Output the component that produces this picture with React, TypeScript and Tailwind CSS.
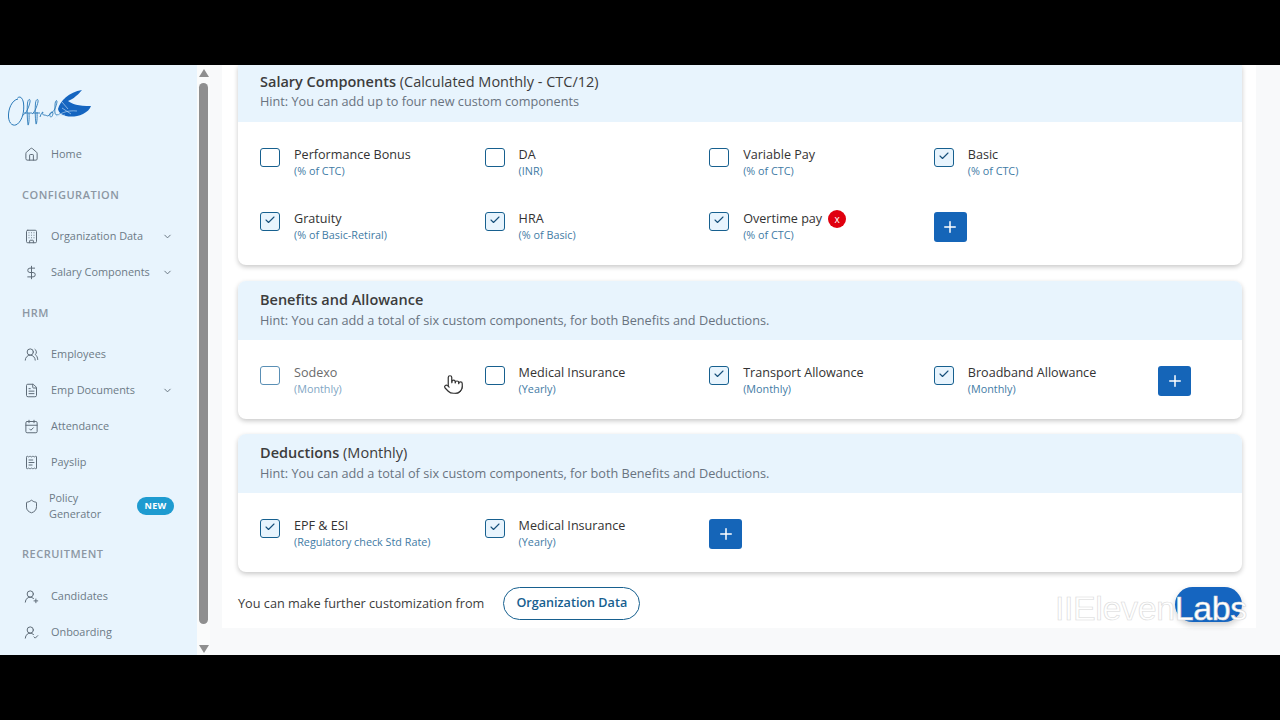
import { Building, CalendarCheck, Check, ChevronDown, DollarSign, FileText, House, Plus, Pointer, ReceiptText, Shield, UserRoundCheck, UserRoundPlus, UsersRound } from 'lucide-react';
import type { ReactNode } from 'react';

type Item = { label: string; sub: string; checked?: boolean; muted?: boolean; remove?: boolean };

const salary: Item[] = [
  { label: 'Performance Bonus', sub: '(% of CTC)' },
  { label: 'DA', sub: '(INR)' },
  { label: 'Variable Pay', sub: '(% of CTC)' },
  { label: 'Basic', sub: '(% of CTC)', checked: true },
  { label: 'Gratuity', sub: '(% of Basic-Retiral)', checked: true },
  { label: 'HRA', sub: '(% of Basic)', checked: true },
  { label: 'Overtime pay', sub: '(% of CTC)', checked: true, remove: true },
];
const benefits: Item[] = [
  { label: 'Sodexo', sub: '(Monthly)', muted: true },
  { label: 'Medical Insurance', sub: '(Yearly)' },
  { label: 'Transport Allowance', sub: '(Monthly)', checked: true },
  { label: 'Broadband Allowance', sub: '(Monthly)', checked: true },
];
const deductions: Item[] = [
  { label: 'EPF & ESI', sub: '(Regulatory check Std Rate)', checked: true },
  { label: 'Medical Insurance', sub: '(Yearly)', checked: true },
];

function Logo() {
  return (
    <svg viewBox="0 0 84 40" className="w-[84px] h-[40px]" fill="none">
      {/* script part of the logo */}
      <path d="M11 10C5 11 1 20 1.500 28c.5 7 5 10 9 7 5-4 7-13 6-21-1-6-4-7-6-5" stroke="#2a79b8" strokeWidth="1" />
      <path d="M16 26c3-1 6-8 7-13 .5-4-2-3-2.500 1-.5 6-.5 14 .5 22 .5 1 1.500-5 1-12M17 24h8" stroke="#2a79b8" strokeWidth="0.9" />
      <path d="M25 25c3-2 5-8 6-12 .5-4-2-3-2.500 1-.5 6-.5 13 .5 21 .5 1 1.500-5 1-12M26 24h7" stroke="#2a79b8" strokeWidth="0.9" />
      <path d="M33 28c1-3 2-5 3-5-1 2 0 3 1 3 2 0 3 1 4 1 2-1 2-4 4-4 2 0 .5 5-1 5-1 0-2-2 0-4 3-1 5-6 6-11 0-3-2-1-2 3 0 5-1 10 2 10 2 0 4-2 6-4" stroke="#2a79b8" strokeWidth="0.9" />
      {/* feather */}
      <path d="M51 20C53 12 62 3 75 1c-2 2-3 4-6 6-3 3-6 4-8 5 4 3 10 5 23 5-1 3-4 6-8 8-6 3-13 3-17 2-4-1-7-3-8-7z" fill="#1565c0" />
      <path d="M46 31c6-7 14-10 24-9M55 19l9 6M55 13l6 7M50 27l8-1" stroke="#cfe6f8" strokeWidth="0.6" />
    </svg>
  );
}

function Section({ children }: { children: ReactNode }) {
  return <div className="h-4 flex items-center pl-[22px] text-[11px] font-semibold tracking-[0.5px] text-[#8c97a3]">{children}</div>;
}

function NavItem({ icon, label, chevron }: { icon: ReactNode; label: string; chevron?: boolean }) {
  return (
    <div className="h-[36px] flex items-center pl-[24px] text-[#6c7a86]">
      <span className="w-[27px] shrink-0">{icon}</span>
      <span className="text-[10.9px] whitespace-nowrap">{label}</span>
      {chevron && <ChevronDown size={11} className="absolute left-[162px] text-[#5f6c78]" />}
    </div>
  );
}

function Sidebar() {
  const ic = 'w-[15px] h-[15px] text-[#5f6c78]';
  return (
    <aside className="w-[197px] shrink-0 bg-[#e8f4fd] overflow-hidden relative">
      <div className="pt-[24px] pl-[7px] h-[71px]"><Logo /></div>
      <NavItem icon={<House className={ic} strokeWidth={1.6} />} label="Home" />
      <div className="mt-[15px]"><Section>CONFIGURATION</Section></div>
      <div className="mt-[15px]">
        <NavItem icon={<Building className={ic} strokeWidth={1.6} />} label="Organization Data" chevron />
        <NavItem icon={<DollarSign className={ic} strokeWidth={1.6} />} label="Salary Components" chevron />
      </div>
      <div className="mt-[15px]"><Section>HRM</Section></div>
      <div className="mt-[15px]">
        <NavItem icon={<UsersRound className={ic} strokeWidth={1.6} />} label="Employees" />
        <NavItem icon={<FileText className={ic} strokeWidth={1.6} />} label="Emp Documents" chevron />
        <NavItem icon={<CalendarCheck className={ic} strokeWidth={1.6} />} label="Attendance" />
        <NavItem icon={<ReceiptText className={ic} strokeWidth={1.6} />} label="Payslip" />
      </div>
      <div className="h-[52px] flex items-center pl-[24px] text-[#6c7a86]">
        <span className="w-[25px] shrink-0"><Shield className={ic} strokeWidth={1.6} /></span>
        <span className="w-[70px] text-[10.9px] leading-[16px]">Policy Generator</span>
        <span className="ml-[18px] w-[37px] h-[18px] rounded-full bg-[#1e9bd0] text-white text-[9px] font-bold flex items-center justify-center tracking-[0.3px]">NEW</span>
      </div>
      <div className="mt-[14px]"><Section>RECRUITMENT</Section></div>
      <div className="mt-[16px]">
        <NavItem icon={<UserRoundPlus className={ic} strokeWidth={1.6} />} label="Candidates" />
        <NavItem icon={<UserRoundCheck className={ic} strokeWidth={1.6} />} label="Onboarding" />
      </div>
    </aside>
  );
}

function Scrollbar() {
  return (
    <div className="w-[13px] shrink-0 bg-[#fafbfb] flex flex-col items-center">
      <div className="mt-[4px] w-0 h-0 border-x-[5px] border-x-transparent border-b-[8px] border-b-[#8f8f8f]" />
      <div className="mt-[6px] w-[9px] h-[541px] rounded-full bg-[#8f8f8f]" />
      <div className="mt-[21px] w-0 h-0 border-x-[5px] border-x-transparent border-t-[8px] border-t-[#8f8f8f]" />
    </div>
  );
}

function Option({ item }: { item: Item }) {
  return (
    <div className="flex h-[54px]">
      <div className={`mt-[1px] w-[20px] h-[19px] shrink-0 rounded-[3px] border-[1.5px] flex items-center justify-center ${item.muted ? 'border-[#5a8fb5]' : 'border-[#17608f]'} ${item.checked ? 'bg-[#e8f4fd]' : 'bg-white'}`}>
        {item.checked && <Check size={12} strokeWidth={2.2} className="text-[#17507a] -mt-[3px]" />}
      </div>
      <div className="ml-[14px]">
        <div className="flex items-center h-[16px]">
          <span className={`text-[12.6px] leading-[16px] whitespace-nowrap ${item.muted ? 'text-[#6b6b6b]' : 'text-[#333]'}`}>{item.label}</span>
          {item.remove && <span className="ml-[6px] w-[18px] h-[18px] rounded-full bg-[#e0000f] text-white text-[10px] flex items-center justify-center">x</span>}
        </div>
        <div className={`text-[10.8px] leading-[16px] whitespace-nowrap ${item.muted ? 'text-[#7fa6c4]' : 'text-[#3f7ba5]'}`}>{item.sub}</div>
      </div>
    </div>
  );
}

function AddButton() {
  return (
    <div className="w-[33px] h-[30px] mt-[1px] rounded-[3px] bg-[#1565b8] flex items-center justify-center">
      <Plus size={18} strokeWidth={2} className="text-white" />
    </div>
  );
}

function Card({ title, note, hint, items, cols, topCut }: { title: string; note?: string; hint: string; items: Item[]; cols: string; topCut?: boolean }) {
  return (
    <section className={`bg-white shadow-[0_2px_5px_rgba(0,0,0,0.22)] rounded-b-[8px] ${topCut ? '' : 'rounded-t-[8px]'}`}>
      <div className={`bg-[#e8f4fd] px-[22px] ${topCut ? 'pt-[7px] h-[57px]' : 'pt-[9px] h-[59px] rounded-t-[8px]'}`}>
        <div className="text-[14.5px] leading-[20px] text-[#3c3c3c]">
          <span className="font-semibold">{title}</span>{note && ` ${note}`}
        </div>
        <div className={`text-[12.7px] leading-[20px] text-[#687380] ${topCut ? '-mt-px' : ''}`}>{hint}</div>
      </div>
      <div className={`grid ${cols} gap-y-[10px] pl-[22px] pt-[25px]`}>
        {items.map((it) => <Option key={it.label + it.sub} item={it} />)}
        <AddButton />
      </div>
    </section>
  );
}

export default function App() {
  return (
    <div className="w-[1280px] h-[720px] bg-black overflow-hidden py-[65px] font-['Open_Sans',sans-serif]">
      <div className="relative h-[590px] flex overflow-hidden bg-[#f8f9fa]">
        <Sidebar />
        <Scrollbar />
        <main className="ml-[12px] w-[1034px] h-[563px] bg-white pl-[16px] pr-[14px] flex flex-col">
          <Card title="Salary Components" note="(Calculated Monthly - CTC/12)" hint="Hint: You can add up to four new custom components" items={salary} cols="grid-cols-[repeat(4,224.6px)]" topCut />
          <div className="h-[16px] shrink-0" />
          <Card title="Benefits and Allowance" hint="Hint: You can add a total of six custom components, for both Benefits and Deductions." items={benefits} cols="grid-cols-[repeat(5,224.6px)]" />
          <div className="h-[15px] shrink-0" />
          <Card title="Deductions" note="(Monthly)" hint="Hint: You can add a total of six custom components, for both Benefits and Deductions." items={deductions} cols="grid-cols-[repeat(5,224.6px)]" />
          <div className="mt-[15px] flex items-start justify-between">
            <div className="flex items-center">
              <span className="text-[12.7px] text-[#3c3c3c]">You can make further customization from</span>
              <span className="ml-[19px] h-[33px] w-[137px] rounded-full border-[1.5px] border-[#17608f] flex items-center justify-center text-[12.6px] font-semibold text-[#17608f]">Organization Data</span>
            </div>
            <div className="w-[67px] h-[35px] rounded-full bg-[#1565c0] shadow-[0_3px_6px_rgba(0,0,0,0.2)]" />
          </div>
        </main>
        {/* watermark and cursor sit on top of the recording */}
        <span className="absolute left-[1055px] top-[521px] text-[34px] leading-[44px] tracking-[-0.4px] font-['Liberation_Sans',sans-serif] text-white [-webkit-text-stroke:0.6px_#d8d8d8]">IIElevenLabs</span>
        <Pointer size={21} strokeWidth={1.4} className="absolute left-[443px] top-[309px] text-[#333] fill-white" />
      </div>
    </div>
  );
}
